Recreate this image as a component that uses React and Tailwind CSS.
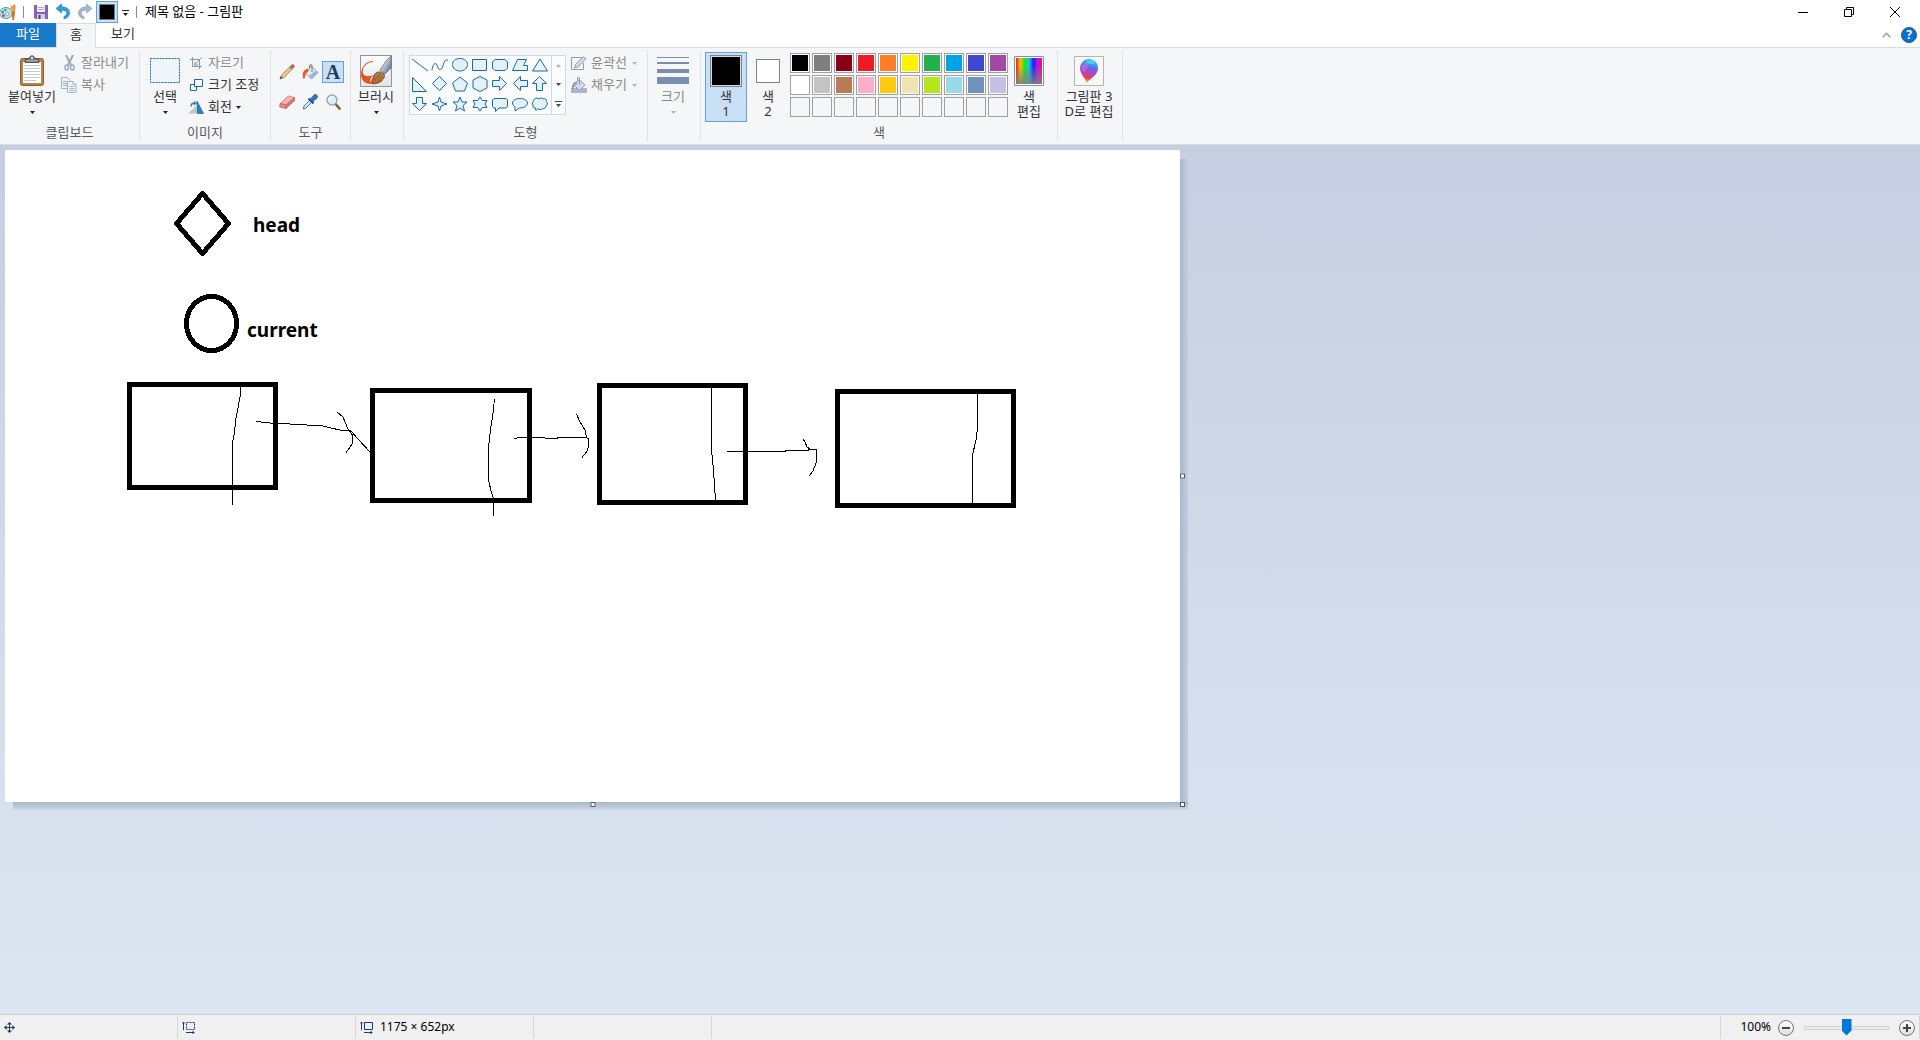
import React from "react";

const PALETTE = [
  ["bg-black", "검정"],
  ["bg-[#7f7f7f]", "회색-50%"],
  ["bg-[#880015]", "진한 빨강"],
  ["bg-[#ed1c24]", "빨강"],
  ["bg-[#ff7f27]", "주황"],
  ["bg-[#fff200]", "노랑"],
  ["bg-[#22b14c]", "녹색"],
  ["bg-[#00a2e8]", "옥색"],
  ["bg-[#3f48cc]", "남색"],
  ["bg-[#a349a4]", "자주"],
  ["bg-white", "흰색"],
  ["bg-[#c3c3c3]", "회색-25%"],
  ["bg-[#b97a57]", "갈색"],
  ["bg-[#ffaec9]", "장미색"],
  ["bg-[#ffc90e]", "황금색"],
  ["bg-[#efe4b0]", "연한 노랑"],
  ["bg-[#b5e61d]", "라임색"],
  ["bg-[#99d9ea]", "연한 옥색"],
  ["bg-[#7092be]", "청회색"],
  ["bg-[#c8bfe7]", "연보라"],
];
const EMPTY_SLOTS = [1, 2, 3, 4, 5, 6, 7, 8, 9, 10];

function Down({ className = "text-[#222]" }) {
  return (
    <svg width="5" height="3" viewBox="0 0 5 3" className={`shrink-0 ${className}`} aria-hidden="true">
      <path d="M0 0h5L2.500 3z" fill="currentColor" />
    </svg>
  );
}

/* ---------- quick access and window icons ---------- */

const AppIcon = () => (
  <svg width="16" height="16" viewBox="0 0 16 16">
    <ellipse cx="6" cy="9" rx="6.500" ry="5.500" fill="#bfe3f0" stroke="#4f9cbd" />
    <circle cx="2.800" cy="8" r="1.400" fill="#2f8fd6" />
    <circle cx="5.500" cy="6" r="1.300" fill="#4cae3f" />
    <circle cx="3.500" cy="11.500" r="1.500" fill="#e2483d" />
    <circle cx="7.500" cy="10" r="1.700" fill="#fff" stroke="#4f9cbd" strokeWidth=".8" />
    <path d="M10.500 1l2 1.500L14 0l1.500 1.500L15 8h-3.500z" fill="#ee8b2c" />
    <path d="M11.500 8H15l-1 8h-1.500z" fill="#c9702a" />
    <path d="M12.500 3v4" stroke="#f9c77d" />
  </svg>
);

const SaveIcon = () => (
  <svg width="14" height="14" viewBox="0 0 14 14">
    <path d="M0 0h14v14H1.500L0 12.500z" fill="#8a5fb8" />
    <path d="M3 0h8v7H3z" fill="#f3effa" />
    <path d="M4 2.500h6M4 4.500h6" stroke="#b9a6d6" />
    <path d="M3 9h8v5H3z" fill="#d8cbe8" />
    <path d="M4.500 10h2v4h-2z" fill="#54347d" />
  </svg>
);

const UndoIcon = ({ color, dark, flip }) => (
  <svg width="14" height="15" viewBox="0 0 14 15" className={flip ? "-scale-x-100" : ""}>
    <path d="M0 4.500L5.500 0v3C10 2.500 13.500 5 13.500 9c0 3-2 5-5.500 6v-2.500c2-.8 3-2 2.800-3.700C10.500 7 8.500 6 5.500 6.200V9z" fill={color} stroke={dark} strokeWidth=".7" />
  </svg>
);

const Bar = () => <span className="h-3 w-px bg-[#8d8d8d]" />;

function TitleBar() {
  return (
    <header className="flex h-[23px] items-center bg-white">
      <span className="w-[23px]"><AppIcon /></span>
      <Bar />
      <button aria-label="저장" className="ml-[9px] grid h-[22px] w-[15px] place-items-center"><SaveIcon /></button>
      <button aria-label="실행 취소" className="ml-[7px] grid h-[22px] w-4 place-items-center"><UndoIcon color="#2e9fe0" dark="#1b83c4" /></button>
      <button aria-label="다시 실행" className="ml-1.5 grid h-[22px] w-4 place-items-center"><UndoIcon color="#a3b4ce" dark="#93a5c1" flip /></button>
      <button aria-label="색 1" className="ml-[3px] grid h-[22px] w-[22px] place-items-center border border-[#5fa3e6] bg-[#cce0f7]">
        <span className="h-4 w-4 border border-[#777] bg-black" />
      </button>
      <button aria-label="빠른 실행 도구 모음 사용자 지정" className="mx-[3px] grid h-[22px] w-[9px] place-items-center pt-1">
        <svg width="7" height="7" viewBox="0 0 7 7"><path d="M0 0h7v1H0zM1 3h5L3.500 6z" fill="#222" /></svg>
      </button>
      <span className="ml-[3px] flex"><Bar /></span>
      <h1 className="ml-2 pb-0.5 text-[13px] leading-5">제목 없음 - 그림판</h1>
      <div className="mr-0.5 ml-auto flex">
        <button aria-label="최소화" className="grid h-5 w-[46px] place-items-center">
          <svg width="10" height="10" viewBox="0 0 10 10"><path d="M0 5h10v1H0z" /></svg>
        </button>
        <button aria-label="이전 크기로 복원" className="grid h-5 w-[46px] place-items-center">
          <svg width="10" height="10" viewBox="0 0 10 10" fill="none" stroke="#000"><path d="M.5 2.500h7v7h-7zM2.500 2.500v-2h7v7h-2" /></svg>
        </button>
        <button aria-label="닫기" className="grid h-5 w-[46px] place-items-center">
          <svg width="10" height="10" viewBox="0 0 10 10" stroke="#000"><path d="M0 0l10 10M10 0L0 10" /></svg>
        </button>
      </div>
    </header>
  );
}

function Tabs() {
  return (
    <nav className="flex h-6 items-stretch bg-white text-[13px] leading-5">
      <button className="w-14 bg-[#1979ca] pb-1 text-white">파일</button>
      <button aria-current="page" className="relative -mb-px w-10 border border-b-0 border-[#dadbdc] bg-[#f5f6f7] pb-1.5 text-[#333]">홈</button>
      <button className="w-[54px] pb-1.5 text-[#333]">보기</button>
      <div className="ml-auto flex items-center gap-[7px] pr-[3px]">
        <button aria-label="리본 최소화" className="grid h-5 w-4 place-items-center">
          <svg width="9" height="6" viewBox="0 0 9 6" fill="none" stroke="#9a9a9a" strokeWidth="1.400"><path d="M.7 5.200l3.800-4 3.800 4" /></svg>
        </button>
        <button aria-label="도움말" className="grid h-4 w-4 place-items-center rounded-full border border-[#1d5b96] bg-[#0a6fd0] text-[12px] leading-3 font-bold text-white">?</button>
      </div>
    </nav>
  );
}

/* ---------- ribbon building blocks ---------- */

function Group({ label, className, children }) {
  return (
    <section className={`flex shrink-0 flex-col border-r border-[#e2e3e4] pt-0.5 ${className}`}>
      <div className="flex h-[71px]">{children}</div>
      <h2 className="text-center text-[13px] leading-[18px] text-[#5a5a5a]">{label}</h2>
    </section>
  );
}

function BigButton({ icon, label, second, className, muted }) {
  return (
    <button className={`flex h-[70px] shrink-0 flex-col items-center text-[13px] leading-[15px] ${muted ? "text-[#8a8a8a]" : "text-[#333]"} ${className}`}>
      <span className="mt-0.5 mb-0.5 grid h-[33px] place-items-center">{icon}</span>
      <span className="whitespace-nowrap">{label}</span>
      <span className="flex h-[15px] items-center whitespace-nowrap">
        {second || <Down className={muted ? "mt-px text-[#b4b4b4]" : "mt-px text-[#222]"} />}
      </span>
    </button>
  );
}

function SmallButton({ icon, label, muted, arrow }) {
  return (
    <button className={`flex h-[22px] items-center gap-1 text-[13px] leading-5 ${muted ? "text-[#8a8a8a]" : "text-[#333]"}`}>
      <span className="grid w-4 place-items-center">{icon}</span>
      <span className="pb-0.5 whitespace-nowrap">{label}</span>
      {arrow && <Down className={muted ? "ml-px text-[#b4b4b4]" : "text-[#222]"} />}
    </button>
  );
}

/* ---------- ribbon icons ---------- */

const PasteIcon = () => (
  <svg width="26" height="32" viewBox="0 0 26 32">
    <rect x="1.500" y="3.500" width="23" height="27" rx="2" fill="#b5854a" stroke="#8a5f2c" />
    <path d="M4 7h18v21H4z" fill="#fff" />
    <path d="M5 10.500h16M5 13.500h16M5 16.500h16M5 19.500h16M5 22.500h16M5 25.500h12" stroke="#bcc9d8" />
    <path d="M6 7.500V5l4-1.500C10.500 0 15.500 0 16 3.500L20 5v2.500z" fill="#777" stroke="#555" />
    <path d="M7 5.800h12" stroke="#c4c4c4" />
    <circle cx="13" cy="3" r="1.200" fill="#ddd" />
  </svg>
);
const CutIcon = () => (
  <svg width="11" height="16" viewBox="0 0 11 16" fill="none" stroke="#9aaac6">
    <path d="M2 0l5 10M9 0L4 10" strokeWidth="2" />
    <ellipse cx="2.700" cy="12.500" rx="1.800" ry="2.500" strokeWidth="1.400" />
    <ellipse cx="8.300" cy="12.500" rx="1.800" ry="2.500" strokeWidth="1.400" />
  </svg>
);
const CopyIcon = () => (
  <svg width="16" height="16" viewBox="0 0 16 16" fill="#f1f4fa" stroke="#a3b2cd">
    <path d="M.5.5h5.500l3 3v8H.5z" />
    <path d="M2 4.500h4M2 6.500h4M2 8.500h4" />
    <path d="M6.500 4.500h5.500l3 3v8H6.500z" />
    <path d="M12 4.500v3h3M8.500 9.500h5M8.500 11.500h5M8.500 13.500h5" />
  </svg>
);
const SelectIcon = () => (
  <svg width="30" height="25" viewBox="0 0 30 25">
    <path d="M.5.5h29v24H.5z" fill="#eef5fb" stroke="#1a69ad" strokeDasharray="2 1" />
  </svg>
);
const CropIcon = () => (
  <svg width="12" height="12" viewBox="0 0 12 12" fill="none" stroke="#8497ba">
    <path d="M2.500 0v9.500H12M0 2.500h9.500V12M4 8.500L11.500.5M5 5v3h3" />
  </svg>
);
const ResizeIcon = () => (
  <svg width="13" height="12" viewBox="0 0 13 12" fill="#f5fafd" stroke="#1a69ad">
    <path d="M.5 5.500h6v6h-6z" />
    <path d="M4.500.5h8v7h-8z" />
  </svg>
);
const RotateIcon = () => (
  <svg width="16" height="13" viewBox="0 0 16 13">
    <path d="M0 12.500L8 5v7.500z" fill="#c4c6ca" />
    <path d="M9 0l6.500 12.500H9z" fill="#2a86bd" stroke="#155b88" strokeWidth=".6" />
    <path d="M3 5.500C3 3 4.500 2 7 2" fill="none" stroke="#2a7fd0" strokeWidth="1.500" />
    <path d="M6 0l3 2.200L6 4.500z" fill="#2a7fd0" />
  </svg>
);
const PencilIcon = () => (
  <svg width="16" height="16" viewBox="0 0 16 16">
    <path d="M1 15l1.500-4L11.500 2.200l2.200 2.200L5 13.500z" fill="#f0c98a" stroke="#8a5f2c" strokeWidth=".7" />
    <path d="M11.700 2l1.300-1.300c1-.8 2.800 1 2.200 2.200L14 4.300z" fill="#e06a64" stroke="#8a3a2c" strokeWidth=".6" />
    <path d="M10.700 3l2.300 2.300" stroke="#5aa75a" strokeWidth="1.500" />
    <path d="M1 15l.8-2.500L3.500 14z" fill="#333" />
  </svg>
);
const BucketIcon = () => (
  <svg width="17" height="16" viewBox="0 0 17 16">
    <path d="M9 2l7 6.500-6.500 6.500L4 9.500z" fill="#e3ebf3" stroke="#7a8ea6" strokeWidth=".9" />
    <path d="M9.500 14.500L16 8.500l-3-1.500L7 12z" fill="#8fbbe0" />
    <path d="M10 8V1.500C10 .2 7.500.2 7.500 1.500V4" fill="none" stroke="#777" />
    <path d="M6.500 5C3 4.500.2 7 .8 13.500c.2 1.500 1.800 1.500 2.200 0 .4-3 .8-5 3-6z" fill="#e8582a" />
  </svg>
);
const EraserIcon = () => (
  <svg width="16" height="14" viewBox="0 0 16 14">
    <path d="M1 8.500L9.500 1l6 1.500L7 10z" fill="#f6b0ae" stroke="#cf7674" strokeWidth=".8" />
    <path d="M1 8.500L7 10v3.500L.8 12z" fill="#e98a88" stroke="#c06664" strokeWidth=".8" />
    <path d="M7 10l8.500-7.500v3L7 13.500z" fill="#d97472" stroke="#c06664" strokeWidth=".8" />
  </svg>
);
const DropperIcon = () => (
  <svg width="16" height="16" viewBox="0 0 16 16">
    <path d="M1 15l1-3 6-6 2 2-6 6z" fill="#cfe3f4" stroke="#5d7e9c" />
    <path d="M6.500 4.500l5 5" stroke="#1f4f82" strokeWidth="2" />
    <path d="M8 5.500L12 1c2-1.500 4.500 1 3 3l-4.500 4z" fill="#2a78bf" stroke="#1f4f82" strokeWidth=".7" />
  </svg>
);
const MagnifierIcon = () => (
  <svg width="15" height="16" viewBox="0 0 15 16">
    <path d="M9.500 10l4 4.500" stroke="#8a5a30" strokeWidth="2.600" strokeLinecap="round" />
    <circle cx="6" cy="6" r="5" fill="#dbeefb" stroke="#9ba5b2" strokeWidth="1.400" />
    <path d="M3 6c0-2 1.500-3 3-3" stroke="#fff" fill="none" strokeWidth="1.300" />
  </svg>
);
const BrushIcon = () => (
  <svg width="32" height="32" viewBox="0 0 32 32">
    <defs>
      <linearGradient id="brush-bg" x2="0" y2="1"><stop stopColor="#fff" /><stop offset="1" stopColor="#dfe5ec" /></linearGradient>
      <linearGradient id="handle" x2="1" y2="1"><stop stopColor="#f4f7fa" /><stop offset=".5" stopColor="#b3bfcd" /><stop offset="1" stopColor="#42546c" /></linearGradient>
    </defs>
    <path d="M.5.5h31v31H.5z" fill="url(#brush-bg)" stroke="#8f9499" />
    <path d="M13 7C6 7 2 13 3 18c1 4 6 4 10 2-3 4-4 6-2 9-6 0-10-4-10-9C1 12 6 6 13 6z" fill="#e8511f" />
    <path d="M9 28c4 3 13 1 14-4l-8-5c-3 2-2 6-6 9z" fill="#ee602c" />
    <path d="M12 28c2-4 1-8 4-10 3-2 6-1 8 1 1 3 0 5-3 7-3 2-6 2-9 2z" fill="#b07c46" stroke="#6f451e" strokeWidth=".8" />
    <path d="M15 26c1-3 2-4 5-6M18 26c1-2 2-3 4-4" stroke="#6f451e" strokeWidth=".7" fill="none" />
    <path d="M20 15l6-9 5-5v12l-6 6z" fill="url(#handle)" stroke="#5d6b7c" strokeWidth=".7" />
  </svg>
);
const OutlineIcon = () => (
  <svg width="16" height="15" viewBox="0 0 16 15" fill="none" stroke="#8b9bb9">
    <path d="M11 1.500H.5v12h12V7" />
    <path d="M3.500 12l1-3.500L12.500.8l2.500 2-8 8z" fill="#d5dceb" />
  </svg>
);
const FillIcon = () => (
  <svg width="16" height="16" viewBox="0 0 16 16">
    <path d="M0 11h16v5H0z" fill="#a8b5cd" />
    <path d="M8 2.500l6 5.500-5.500 5.500L3 8z" fill="#d3dbe9" stroke="#8b9bb9" />
    <path d="M8.500 8V1c0-1-2-1-2 0v3" stroke="#8b9bb9" fill="none" />
    <path d="M6 4.500C2 5 .5 8 1 12h2c0-3 1-4 3-5z" fill="#8b9bb9" />
  </svg>
);
const SizeIcon = () => (
  <svg width="32" height="30" viewBox="0 0 32 30" fill="#7b8db0">
    <path d="M0 1h32v1H0zM0 6h32v2H0zM0 13h32v4H0zM0 21h32v7H0z" />
  </svg>
);
const SpectrumIcon = () => (
  <svg width="30" height="30" viewBox="0 0 30 30">
    <defs>
      <linearGradient id="hue">
        <stop stopColor="#e8202a" /><stop offset=".17" stopColor="#f5c400" /><stop offset=".34" stopColor="#1fe01f" />
        <stop offset=".5" stopColor="#10c8e0" /><stop offset=".67" stopColor="#2020f0" /><stop offset=".84" stopColor="#c010e8" />
        <stop offset="1" stopColor="#f01070" />
      </linearGradient>
      <linearGradient id="hue-fade" x2="0" y2="1"><stop offset=".3" stopColor="#808080" stopOpacity="0" /><stop offset="1" stopColor="#808080" stopOpacity=".9" /></linearGradient>
    </defs>
    <path d="M.5.5h29v29H.5z" fill="#fff" stroke="#909090" />
    <path d="M2 2h26v26H2z" fill="url(#hue)" />
    <path d="M2 2h26v26H2z" fill="url(#hue-fade)" />
  </svg>
);
const Paint3DIcon = () => (
  <svg width="30" height="30" viewBox="0 0 30 30">
    <defs>
      <linearGradient id="drop" x1=".6" y1="0" x2=".4" y2="1">
        <stop stopColor="#2ad0f0" /><stop offset=".35" stopColor="#5a6cf0" /><stop offset=".6" stopColor="#c03fb8" />
        <stop offset=".8" stopColor="#e8404a" /><stop offset="1" stopColor="#f8c020" />
      </linearGradient>
    </defs>
    <path d="M.5.5h29v29H.5z" fill="#f8f8f8" stroke="#b5b5b5" />
    <path d="M12 27c1-4-5-7-6-14C6 7 10 3 15 3s9 4 9 9c0 7-7 10-12 15z" fill="url(#drop)" />
    <path d="M7 12c1-5 5-6 7-4 2 3-3 4-2 7-3 1-5 0-5-3z" fill="#c070dc" opacity=".7" />
    <ellipse cx="17" cy="6" rx="4.500" ry="2" fill="#3fe0f0" opacity=".7" />
  </svg>
);

const SHAPES = [
  ["선", "M2 4l16 12"],
  ["곡선", "M2 15c1-7 4-8 5-5 1 5 4 7 6 1 1-5 2-6 5-6"],
  ["타원", "M10 3.500c4.500 0 7.500 2.700 7.500 6s-3 6.500-7.500 6.500-7.500-3-7.500-6.500 3-6 7.500-6z"],
  ["직사각형", "M2.500 4.500h14v11h-14z"],
  ["둥근 직사각형", "M5 4.500h10l2.500 2.500v6L15 15.500H5L2.500 13V7z"],
  ["다각형", "M7.500 4.500h9l-3 6h4v5h-15z"],
  ["삼각형", "M10 4l7.500 12h-15z"],
  ["직각 삼각형", "M2.500 3.500v14h14z"],
  ["다이아몬드", "M9.500 2.500l7 7-7 7-7-7z"],
  ["오각형", "M10 3l7.500 6-3 8h-9l-3-8z"],
  ["육각형", "M10 2.500l7 3.500v8l-7 3.500L3 14V6z"],
  ["오른쪽 화살표", "M2.500 6.500h7v-4l7 7-7 7v-4h-7z"],
  ["왼쪽 화살표", "M17.500 6.500h-7v-4l-7 7 7 7v-4h7z"],
  ["위쪽 화살표", "M6.500 16.500v-7h-4l7-7 7 7h-4v7z"],
  ["아래쪽 화살표", "M6.500 3.500v6h-4l7 7 7-7h-4v-6z"],
  ["4각별", "M9.500 3l1.500 5 6 2-6 2-1.500 5-1.500-5-6-2 6-2z"],
  ["5각별", "M10 3l2 5h5l-4 3.500 1.500 5.500-4.500-3-4.500 3L7 11.500 3 8h5z"],
  ["6각별", "M10 3l2.300 3.500h4.700l-2 3.500 2 3.500h-4.700L10 17l-2.300-3.500H3L5 10 3 6.500h4.700z"],
  ["모서리가 둥근 직사각형 설명선", "M4 4.500h12l1.500 1.500v6.500L16 14H9l-3.500 3.500V14H4l-1.500-1.500V6z"],
  ["타원형 설명선", "M10 4.500c4.500 0 7.500 2 7.500 4.500s-3 5-8 5L5 17v-4c-1.500-1-2.500-2.500-2.500-4C2.500 6.500 5.500 4.500 10 4.500z"],
  ["구름 모양 설명선", "M5 5c1-1.500 3-1 4 0 1.500-1.500 3.500-1 4 0 2-1 4 .5 3.500 2.500 1.500 1.500 1 3.500-.5 4.500 0 2-2 3-3.500 2.500-1 1.500-3.500 1.500-4.500 0L6 16.500 5.500 14C3 14 2.500 12.500 3 11 2 9.500 2 8 3.500 7.500 3 6 4 5 5 5z"],
];

function ShapeGallery() {
  return (
    <div className="mt-[3px] ml-[5px] flex h-[60px] border border-[#d5d8dc] bg-[#fafbfc]">
      <div className="grid grid-cols-7 grid-rows-3">
        {SHAPES.map(([name, d], i) => (
          <button key={name} aria-label={name} className="-mt-px h-5 w-5">
            <svg width="20" height="20" viewBox="0 0 20 20">
              <path d={d} fill={i < 2 ? "none" : "#e3f1f8"} stroke="#1a69ad" />
            </svg>
          </button>
        ))}
      </div>
      <div className="ml-px flex w-[14px] flex-col border-l border-[#d5d8dc]">
        <button aria-label="위로" className="grid flex-1 place-items-center"><Down className="rotate-180 text-[#b0b4bb]" /></button>
        <button aria-label="아래로" className="grid flex-1 place-items-center"><Down className="text-[#3a4a66]" /></button>
        <button aria-label="자세히" className="grid flex-1 place-items-center">
          <svg width="7" height="7" viewBox="0 0 7 7" fill="#3a4a66"><path d="M0 0h7v1H0zM1 3h5L3.500 6z" /></svg>
        </button>
      </div>
    </div>
  );
}

function ToolButton({ label, active, children }) {
  return (
    <button aria-label={label} aria-pressed={!!active} className={`grid h-[22px] w-[22px] place-items-center ${active ? "border border-[#62a2e4] bg-[#c9dff6]" : ""}`}>
      {children}
    </button>
  );
}

function Ribbon() {
  return (
    <div className="flex h-[98px] items-start border-y border-[#dadbdc] bg-[#f5f6f7] pt-0.5">
      <Group label="클립보드" className="w-[140px]">
        <BigButton icon={<PasteIcon />} label="붙여넣기" className="ml-px w-[62px]" />
        <div className="-ml-0.5 flex flex-col">
          <SmallButton icon={<CutIcon />} label="잘라내기" muted />
          <SmallButton icon={<CopyIcon />} label="복사" muted />
        </div>
      </Group>
      <Group label="이미지" className="w-[131px]">
        <BigButton icon={<SelectIcon />} label="선택" className="ml-1 w-[42px]" />
        <div className="ml-0.5 flex flex-col">
          <SmallButton icon={<CropIcon />} label="자르기" muted />
          <SmallButton icon={<ResizeIcon />} label="크기 조정" />
          <SmallButton icon={<RotateIcon />} label="회전" arrow />
        </div>
      </Group>
      <Group label="도구" className="w-20">
        <div className="mt-[9px] ml-[5px] grid grid-cols-3 content-start gap-x-px gap-y-2">
          <ToolButton label="연필"><PencilIcon /></ToolButton>
          <ToolButton label="색 채우기"><BucketIcon /></ToolButton>
          <ToolButton label="텍스트" active>
            <span className="font-['Liberation_Serif',serif] text-[20px] leading-5 font-bold text-[#1f3a63]">A</span>
          </ToolButton>
          <ToolButton label="지우개"><EraserIcon /></ToolButton>
          <ToolButton label="색 선택"><DropperIcon /></ToolButton>
          <ToolButton label="돋보기"><MagnifierIcon /></ToolButton>
        </div>
      </Group>
      <Group className="h-[91px] w-[53px]">
        <BigButton icon={<BrushIcon />} label="브러시" className="ml-px w-12" />
      </Group>
      <Group label="도형" className="w-[244px]">
        <ShapeGallery />
        <div className="ml-[5px] flex flex-col">
          <SmallButton icon={<OutlineIcon />} label="윤곽선" muted arrow />
          <SmallButton icon={<FillIcon />} label="채우기" muted arrow />
        </div>
      </Group>
      <Group className="h-[91px] w-[53px]">
        <BigButton icon={<SizeIcon />} label="크기" muted className="ml-px w-12" />
      </Group>
      <Group label="색" className="w-[357px]">
        <BigButton
          icon={<span className="h-8 w-8 border border-[#808080] bg-[#c9dff6] p-px"><span className="block h-full bg-black" /></span>}
          label="색"
          second="1"
          className="ml-1 w-[42px] bg-[#c9dff6] outline -outline-offset-1 outline-[#62a2e4]"
        />
        <BigButton icon={<span className="h-6 w-6 border border-[#808080] bg-white" />} label="색" second="2" className="w-[42px]" />
        <div className="mt-px grid grid-cols-10 content-start gap-0.5 pl-px">
          {PALETTE.map(([color, name]) => (
            <button key={name} aria-label={name} className="h-5 w-5 border border-[#a0a0a0] bg-white p-px"><span className={`block h-full ${color}`} /></button>
          ))}
          {EMPTY_SLOTS.map((n) => (
            <button key={n} aria-label={`사용자 지정 색 ${n}`} className="h-5 w-5 border border-[#a0a0a0]" />
          ))}
        </div>
        <BigButton icon={<SpectrumIcon />} label="색" second="편집" className="w-[42px]" />
      </Group>
      <Group className="h-[91px] w-[65px]">
        <BigButton icon={<Paint3DIcon />} label="그림판 3" second="D로 편집" className="ml-[3px] w-14" />
      </Group>
    </div>
  );
}

/* ---------- drawing ---------- */

function Drawing() {
  return (
    <svg viewBox="5 150 1175 652" className="block h-full w-full" fill="none" stroke="#000" shapeRendering="crispEdges">
      <g strokeWidth="5">
        <path d="M202.500 193.500L228.500 223.500L202.500 253.500L176.500 223.500z" strokeLinejoin="round" />
        <ellipse cx="211.500" cy="323.500" rx="25" ry="27" />
        <rect x="129.500" y="384.500" width="146" height="103" />
        <rect x="372.500" y="390.500" width="157" height="110" />
        <rect x="599.500" y="385.500" width="146" height="117" />
        <rect x="837.500" y="391.500" width="176" height="114" />
      </g>
      <g>
        <polyline points="240.500,387 240,397 238,408 236,418 234.500,432 232.500,443 232.500,504.500" />
        <polyline points="256,421.500 270,423 290,424 323,426 331,428 340,430 351,431 358,439 370,452" />
        <polyline points="337,412 343,417 348,429 352.500,435 352.500,443 350,447 345.500,453.500" />
        <polyline points="494.500,399 493,413 490.500,430 488.500,447 488.500,480 491.500,493 493.500,498 493.500,515.500" />
        <polyline points="514,438.500 520,437.500 543,437.500 547,438.500 555,438.500 560,437.500 587,437.500" />
        <polyline points="576.500,414 580,422 585,430 586.500,437.500 588.500,439 588.500,447 586.500,452 582,457.500" />
        <polyline points="711.500,388 711.500,450 713.500,470 714.500,485 715.500,500" />
        <polyline points="727,451.500 785,451.500 786,450.500 808,450.500 808,449.500 816.500,449.500 816.500,462 813,471 809,476" />
        <polyline points="803,439 805,442 807,447 810,449" />
        <polyline points="977.500,394 977.500,428 976,440 972.500,455 972.500,503 971.500,508.500" />
      </g>
      <g fill="#000" stroke="none" className="font-['Noto_Sans',sans-serif] text-[19px] font-bold">
        <text x="253" y="232">head</text>
        <text x="247" y="337">current</text>
      </g>
    </svg>
  );
}

const HANDLE = "absolute h-[5px] w-[5px] border border-[#555] bg-white";

function Workspace() {
  return (
    <main className="flex-1 bg-linear-to-b from-[#c5cfe1] to-[#dce6f2] p-[5px]">
      <div className="relative h-[652px] w-[1175px] bg-white">
        <div className="absolute top-[9px] -right-2 bottom-0 w-2 bg-linear-to-r from-[#a9b7cb] to-[#c3cee0]" />
        <div className="absolute -right-2 -bottom-2 left-2 h-2 bg-linear-to-b from-[#a9b5c9] to-[#ccd7e6]" />
        <Drawing />
        <span className={`${HANDLE} top-1/2 -right-[5px] -translate-y-1/2`} />
        <span className={`${HANDLE} -bottom-[5px] left-1/2 -translate-x-1/2`} />
        <span className={`${HANDLE} -right-[5px] -bottom-[5px]`} />
      </div>
    </main>
  );
}

/* ---------- status bar ---------- */

const CELL = "my-px flex w-[178px] items-center gap-1.5 border-r border-[#d5d5d5] pl-1";

function ZoomButton({ label, d }) {
  return (
    <button aria-label={label} className="grid h-4 w-4 place-items-center rounded-full border border-[#777] bg-linear-to-b from-white to-[#ddd]">
      <svg width="8" height="8" viewBox="0 0 8 8"><path d={d} fill="#444" /></svg>
    </button>
  );
}

function StatusBar() {
  return (
    <footer className="flex h-[26px] border-t border-[#d0d0d0] bg-[#f0f0f0] text-[12px]">
      <div className={CELL}>
        <svg width="11" height="11" viewBox="0 0 11 11" fill="#1f3a63"><path d="M5 1h1v9H5zM1 5h9v1H1zM5.500 0L8 2.500H3zM5.500 11L3 8.500h5zM0 5.500L2.500 3v5zM11 5.500L8.500 8V3z" /></svg>
      </div>
      <div className={CELL}>
        <svg width="14" height="13" viewBox="0 0 14 13" fill="none" stroke="#1f3a63">
          <path d="M1.500 1v8M0 2.500L1.500 1 3 2.500M4 11.500h8M10.500 10l1.500 1.500L10.500 13" />
          <path d="M4.500 1.500h8v7h-8z" strokeDasharray="2 1" />
        </svg>
      </div>
      <div className={CELL}>
        <svg width="14" height="13" viewBox="0 0 14 13" fill="none" stroke="#1f3a63">
          <path d="M1.500 1v8M0 2.500L1.500 1 3 2.500M4 11.500h8M10.500 10l1.500 1.500L10.500 13" />
          <path d="M4.500 1.500h8v7h-8z" fill="#e8f2fa" />
        </svg>
        <span className="pb-0.5">1175 × 652px</span>
      </div>
      <div className={CELL} />
      <div className="my-px flex-1 border-r border-[#d5d5d5]" />
      <div className="my-px flex items-center border-r border-[#d5d5d5] pr-1 pl-[19px]">
        <label htmlFor="zoom" className="mr-[7px] pb-0.5">100%</label>
        <ZoomButton label="축소" d="M0 3h8v2H0z" />
        <input
          id="zoom"
          type="range"
          defaultValue="50"
          className="mx-[10px] h-[18px] w-[85px] appearance-none bg-transparent [&::-webkit-slider-runnable-track]:h-1 [&::-webkit-slider-runnable-track]:border [&::-webkit-slider-runnable-track]:border-[#d6d6d6] [&::-webkit-slider-runnable-track]:bg-[#e7eaea] [&::-webkit-slider-thumb]:-mt-[8px] [&::-webkit-slider-thumb]:h-[17px] [&::-webkit-slider-thumb]:w-[10px] [&::-webkit-slider-thumb]:appearance-none [&::-webkit-slider-thumb]:bg-[#0078d7] [&::-webkit-slider-thumb]:[clip-path:polygon(0_0,100%_0,100%_70%,50%_100%,0_70%)]"
        />
        <ZoomButton label="확대" d="M0 3h3V0h2v3h3v2H5v3H3V5H0z" />
      </div>
    </footer>
  );
}

export default function App() {
  return (
    <div className="flex min-h-screen flex-col bg-white font-['Noto_Sans','Noto_Sans_CJK_KR',sans-serif] text-black">
      <TitleBar />
      <Tabs />
      <Ribbon />
      <Workspace />
      <StatusBar />
    </div>
  );
}
